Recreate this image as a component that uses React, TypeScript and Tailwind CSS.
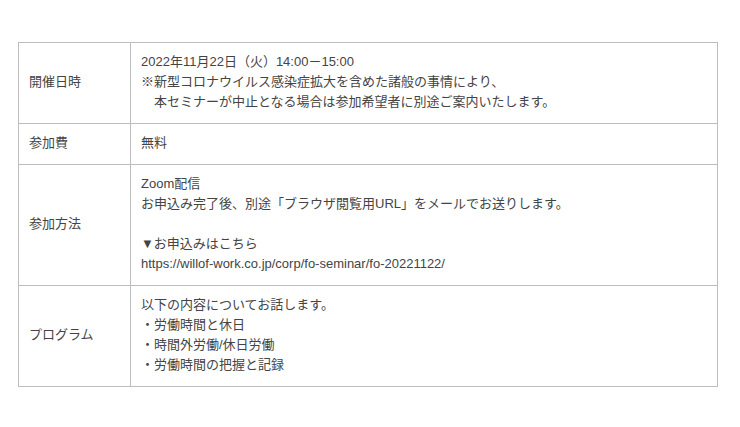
const rows: { label: string; lines: string[] }[] = [
  {
    label: "開催日時",
    lines: [
      "2022年11月22日（火）14:00－15:00",
      "※新型コロナウイルス感染症拡大を含めた諸般の事情により、",
      "　本セミナーが中止となる場合は参加希望者に別途ご案内いたします。",
    ],
  },
  { label: "参加費", lines: ["無料"] },
  {
    label: "参加方法",
    lines: [
      "Zoom配信",
      "お申込み完了後、別途「ブラウザ閲覧用URL」をメールでお送りします。",
      "",
      "▼お申込みはこちら",
      "https://willof-work.co.jp/corp/fo-seminar/fo-20221122/",
    ],
  },
  {
    label: "プログラム",
    lines: [
      "以下の内容についてお話します。",
      "・労働時間と休日",
      "・時間外労働/休日労働",
      "・労働時間の把握と記録",
    ],
  },
];

export default function App() {
  return (
    <div className="min-h-[427px] w-[740px] bg-white pt-[42px] pl-[18px] font-['Liberation_Sans','Noto_Sans_CJK_JP',sans-serif] text-[13px] leading-[20px] text-[#444]">
      <table className="w-[700px] border-collapse">
        <tbody>
          {rows.map((row) => (
            <tr key={row.label}>
              <td className="w-[112px] border border-[#bdbdbd] px-[10px] pt-[9px] pb-[11px] align-middle">
                {row.label}
              </td>
              <td className="border border-[#bdbdbd] px-[10px] pt-[9px] pb-[11px] align-middle">
                {row.lines.map((line, i) => (
                  <div key={i} className="h-[20px] whitespace-pre">
                    {line}
                  </div>
                ))}
              </td>
            </tr>
          ))}
        </tbody>
      </table>
    </div>
  );
}
